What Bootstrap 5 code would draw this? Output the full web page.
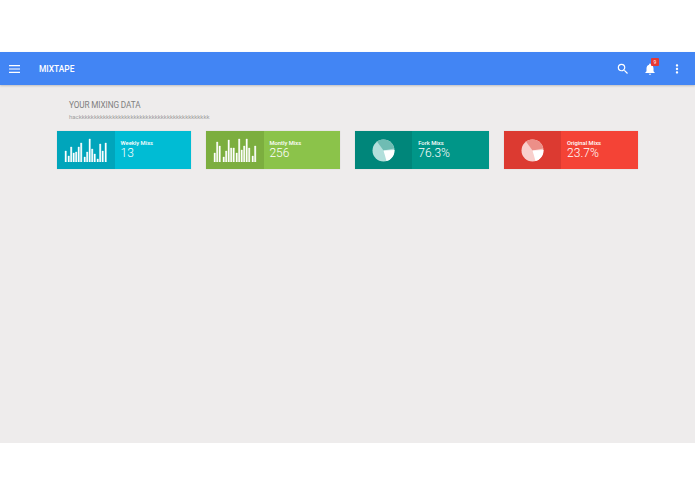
<!DOCTYPE html>
<html lang="en">
<head>
<meta charset="utf-8">
<title>Mixtape</title>
<link rel="stylesheet" href="https://cdn.jsdelivr.net/npm/bootstrap@5.3.0/dist/css/bootstrap.min.css">
<style>
html, body { height: 100%; }
body { background: #fff; font-family: Roboto, "Liberation Sans", sans-serif; }
.page-shell { height: 494px; padding-top: 52px; padding-bottom: 51px; }
.page-inner { height: 100%; background: #eeecec; }
.top-bar { height: 33px; background: #4285f4; padding: 0 11px 0 9px; box-shadow: 0 1px 2px rgba(0,0,0,.2); }
.top-brand { font-size: 8.4px; font-weight: 500; margin: 1px 0 0 19px; color: #fff; line-height: 1; }
.bar-icons { gap: 13px; }
.bar-icons svg { display: block; }
.bell-wrap { width: 14px; height: 14px; }
.bell-badge { top: -3.5px; right: -2px; width: 8px; height: 8px; background: #e53935; color: #fff; font-size: 5px; line-height: 8px; text-align: center; border-radius: 1px; }
.data-head { padding: 15px 0 0 69px; }
.data-title { font-size: 8.2px; line-height: 10px; color: #808080; margin: 0; font-weight: 400; letter-spacing: -.1px; }
.data-sub { font-size: 6px; line-height: 8px; color: #a0a0a0; margin: 3px 0 0; }
.tile-grid { display: grid; grid-template-columns: repeat(4, 1fr); gap: 15px; padding: 10px 57.5px 0 57.2px; }
.tile { height: 38px; color: #fff; box-shadow: 0 0 1px rgba(0,0,0,.15); }
.tile-art { width: 57.6px; flex: none; }
.tile-label { font-size: 5.8px; line-height: 8px; font-weight: 500; }
.tile-value { font-size: 12px; line-height: 13px; font-weight: 300; }
.tile-copy { padding: 8px 0 0 5.8px; }
.t-cyan { background: #00bcd4; } .t-cyan .tile-art { background: #00a5bb; }
.t-green { background: #8bc34a; } .t-green .tile-art { background: #7cae3f; }
.t-teal { background: #009688; } .t-teal .tile-art { background: #00867a; }
.t-red { background: #f44336; } .t-red .tile-art { background: #dc3a31; }
</style>
</head>
<body>
<div class="page-shell">
<div class="page-inner d-flex flex-column">
  <nav class="top-bar d-flex align-items-center justify-content-between">
    <div class="d-flex align-items-center">
      <svg width="11" height="8" viewBox="0 0 11 8"><path fill="#fff" d="M0 0h11v1.2H0zM0 3.4h11v1.2H0zM0 6.8h11V8H0z"/></svg>
      <span class="top-brand">MIXTAPE</span>
    </div>
    <div class="d-flex align-items-center bar-icons">
      <svg width="14" height="14" viewBox="0 0 24 24"><path fill="#fff" d="M15.5 14h-.79l-.28-.27A6.47 6.47 0 0 0 16 9.5 6.5 6.5 0 1 0 9.5 16c1.61 0 3.09-.59 4.23-1.57l.27.28v.79l5 4.99L20.49 19l-4.99-5zm-6 0C7 14 5 12 5 9.5S7 5 9.5 5 14 7 14 9.5 12 14 9.5 14z"/></svg>
      <div class="bell-wrap position-relative">
        <svg width="14" height="14" viewBox="0 0 24 24"><path fill="#fff" d="M12 22c1.1 0 2-.9 2-2h-4c0 1.1.9 2 2 2zm6-6v-5c0-3.07-1.63-5.64-4.5-6.32V4c0-.83-.67-1.5-1.5-1.5s-1.5.67-1.5 1.5v.68C7.64 5.36 6 7.92 6 11v5l-2 2v1h16v-1l-2-2z"/></svg>
        <span class="bell-badge position-absolute">9</span>
      </div>
      <svg width="14" height="14" viewBox="0 0 24 24"><path fill="#fff" d="M12 8c1.1 0 2-.9 2-2s-.9-2-2-2-2 .9-2 2 .9 2 2 2zm0 2c-1.1 0-2 .9-2 2s.9 2 2 2 2-.9 2-2-.9-2-2-2zm0 6c-1.1 0-2 .9-2 2s.9 2 2 2 2-.9 2-2-.9-2-2-2z"/></svg>
    </div>
  </nav>
  <div class="data-head">
    <h1 class="data-title">YOUR MIXING DATA</h1>
    <p class="data-sub">hackkkkkkkkkkkkkkkkkkkkkkkkkkkkkkkkkkkkkkkkkkk</p>
  </div>
  <div class="tile-grid">
    <div class="tile t-cyan d-flex">
      <div class="tile-art d-flex align-items-center justify-content-center">
        <svg width="44" height="24" viewBox="0 0 44 24"><path fill="#fff" stroke="#fff" stroke-width=".35" d="M1 13h1.4v11H1zM4 18h1.4v6H4zM6.5 9h1.4v15H6.5zM9 15h1.4v9H9zM11.5 14h1.4v10h-1.4zM14 9h1.4v15H14zM16.5 5h1.4v19h-1.4zM20 19h1.4v5H20zM22.5 14h1.4v10h-1.4zM25 1h1.4v23H25zM27.5 11h1.4v13h-1.4zM30 16h1.4v8H30zM33 21h1.4v3H33zM35.5 6h1.4v18h-1.4zM38 13h1.4v11H38zM41 5h1.4v19H41z"/></svg>
      </div>
      <div class="tile-copy"><div class="tile-label">Weekly Mixs</div><div class="tile-value">13</div></div>
    </div>
    <div class="tile t-green d-flex">
      <div class="tile-art d-flex align-items-center justify-content-center">
        <svg width="44" height="24" viewBox="0 0 44 24"><path fill="#fff" stroke="#fff" stroke-width=".35" d="M1 15h1.4v9H1zM3.5 4h1.4v20H3.5zM6 8h1.4v16H6zM10 19h1.4v5H10zM12.5 13h1.4v11h-1.4zM15 2h1.4v22H15zM17.5 10h1.4v14h-1.4zM20 10h1.4v14H20zM23 15h1.4v9H23zM25.5 1h1.4v23h-1.4zM28 12h1.4v12H28zM30.5 8h1.4v16h-1.4zM33 1h1.4v23H33zM35.5 10h1.4v14h-1.4zM39 18h1.4v6H39zM41.5 8h1.4v16h-1.4z"/></svg>
      </div>
      <div class="tile-copy"><div class="tile-label">Montly Mixs</div><div class="tile-value">256</div></div>
    </div>
    <div class="tile t-teal d-flex">
      <div class="tile-art d-flex align-items-center justify-content-center">
        <svg width="23" height="23" viewBox="0 0 23 23">
          <circle cx="11.5" cy="11.5" r="11" fill="#b2dfdb"/>
          <path fill="#6fbcb3" d="M11.5 11.5L5 2.6A11 11 0 0 1 22.3 9.5z"/>
          <path fill="#fff" d="M11.5 11.5L22.5 11A11 11 0 0 1 14.5 22.1z"/>
        </svg>
      </div>
      <div class="tile-copy"><div class="tile-label">Fork Mixs</div><div class="tile-value">76.3%</div></div>
    </div>
    <div class="tile t-red d-flex">
      <div class="tile-art d-flex align-items-center justify-content-center">
        <svg width="23" height="23" viewBox="0 0 23 23">
          <circle cx="11.5" cy="11.5" r="11" fill="#f8cfcc"/>
          <path fill="#ec8f88" d="M11.5 11.5L5 2.6A11 11 0 0 1 22.3 9.5z"/>
          <path fill="#fff" d="M11.5 11.5L22.5 11A11 11 0 0 1 14.5 22.1z"/>
        </svg>
      </div>
      <div class="tile-copy"><div class="tile-label">Original Mixs</div><div class="tile-value">23.7%</div></div>
    </div>
  </div>
</div>
</div>
<script src="https://cdn.jsdelivr.net/npm/bootstrap@5.3.0/dist/js/bootstrap.bundle.min.js"></script>
</body>
</html>
